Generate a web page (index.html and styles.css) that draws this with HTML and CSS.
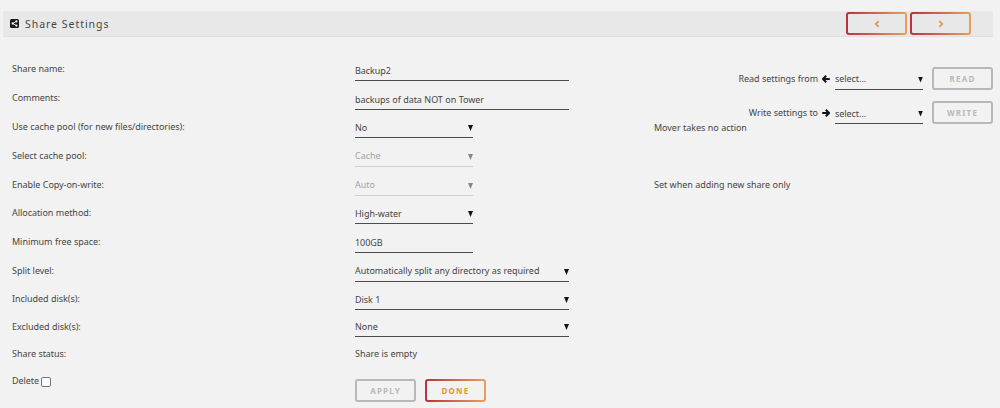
FILE: index.html
```html
<!DOCTYPE html>
<html lang="en">
<head>
	<meta charset="UTF-8">
	<meta name="viewport" content="width=device-width, initial-scale=1.0">
	<link rel="stylesheet" href="styles.css">
	<title>Share Settings</title>
</head>
<body>
	<header class="title">
		<svg class="share" viewBox="0 0 9 9"><rect width="9" height="9" rx="1.6" fill="#1c1b1b"/><path d="M6.4 2.4 2.7 4.5l3.7 2.1" fill="none" stroke="#f2f2f2" stroke-width=".9"/><circle cx="6.4" cy="2.4" r="1.15" fill="#f2f2f2"/><circle cx="2.7" cy="4.5" r="1.15" fill="#f2f2f2"/><circle cx="6.4" cy="6.6" r="1.15" fill="#f2f2f2"/></svg>
		<h1>Share Settings</h1>
		<nav>
			<button class="btn" aria-label="previous"><svg class="chev" viewBox="0 0 6 8"><path d="M4.6 1.2 1.8 4l2.8 2.8"/></svg></button>
			<button class="btn" aria-label="next"><svg class="chev" viewBox="0 0 6 8"><path d="M1.4 1.2 4.2 4 1.4 6.8"/></svg></button>
		</nav>
	</header>

	<main>
		<form class="settings">
			<label for="name">Share name:</label>
			<div class="field wide"><input id="name" type="text" value="Backup2"></div>

			<label for="comments">Comments:</label>
			<div class="field wide"><input id="comments" type="text" value="backups of data NOT on Tower"></div>

			<label for="cache">Use cache pool (for new files/directories):</label>
			<div class="field drop"><select id="cache"><option>No</option></select></div>
			<p class="hint">Mover takes no action</p>

			<label for="pool" class="low">Select cache pool:</label>
			<div class="field drop off"><select id="pool" disabled><option>Cache</option></select></div>

			<label for="cow" class="low">Enable Copy-on-write:</label>
			<div class="field drop off"><select id="cow" disabled><option>Auto</option></select></div>
			<p class="hint">Set when adding new share only</p>

			<label for="alloc">Allocation method:</label>
			<div class="field drop"><select id="alloc"><option>High-water</option></select></div>

			<label for="free" class="low">Minimum free space:</label>
			<div class="field"><input id="free" type="text" value="100GB"></div>

			<label for="split" class="low">Split level:</label>
			<div class="field wide drop"><select id="split"><option>Automatically split any directory as required</option></select></div>

			<label for="include">Included disk(s):</label>
			<div class="field wide drop"><select id="include"><option>Disk 1</option></select></div>

			<label for="exclude">Excluded disk(s):</label>
			<div class="field wide drop"><select id="exclude"><option>None</option></select></div>

			<label>Share status:</label>
			<p class="status">Share is empty</p>

			<label class="delete">Delete <input type="checkbox"></label>
			<div class="actions">
				<button class="btn off" type="button" disabled>Apply</button>
				<button class="btn" type="button">Done</button>
			</div>
		</form>

		<aside class="copy">
			<div class="copy-row">
				<label for="read">Read settings from</label>
				<svg class="arrow" viewBox="0 0 8 8"><path d="M7.8 4H1.2M4.2 .8 1 4l3.2 3.2"/></svg>
				<div class="field drop"><select id="read"><option>select...</option></select></div>
				<button class="btn off" disabled>Read</button>
			</div>
			<div class="copy-row">
				<label for="write">Write settings to</label>
				<svg class="arrow" viewBox="0 0 8 8"><path d="M.2 4h6.6M3.8 .8 7 4 3.8 7.2"/></svg>
				<div class="field drop"><select id="write"><option>select...</option></select></div>
				<button class="btn off" disabled>Write</button>
			</div>
		</aside>
	</main>
</body>
</html>
```
FILE: styles.css
```css
* {
  box-sizing: border-box;
  margin: 0;
  padding: 0;
  font: inherit;
  letter-spacing: inherit;
  word-spacing: inherit;
  color: inherit;
}
body {
  height: 408px;
  overflow: hidden;
  background: #f2f2f2;
  color: #464646;
  font: 9px/12px "Noto Sans", sans-serif;
  letter-spacing: -0.05px;
  word-spacing: 0.2px;
}
.title {
  display: flex;
  align-items: center;
  height: 26px;
  margin: 11px 7px 0 3px;
  padding: 0 22px 0 7px;
  border-bottom: 1px solid #e0e0e0;
  background: #e8e8e8;
}
.share {
  width: 9px;
  height: 9px;
}
.title h1 {
  margin-left: 6px;
  font-size: 10.5px;
  letter-spacing: 0.95px;
}
.title nav {
  display: flex;
  gap: 3px;
  margin-left: auto;
}
.btn {
  display: flex;
  align-items: center;
  justify-content: center;
  width: 61px;
  height: 23px;
  border: 2px solid transparent;
  border-radius: 3px;
  background: linear-gradient(#f2f2f2, #f2f2f2) padding-box,
    linear-gradient(90deg, #b8323f, #e8a05c) border-box;
  color: #e3943f;
  font-size: 8px;
  font-weight: 700;
  letter-spacing: 1.2px;
  text-transform: uppercase;
}
.title .btn {
  background: linear-gradient(#e8e8e8, #e8e8e8) padding-box,
    linear-gradient(90deg, #b8323f, #e8a05c) border-box;
}
.btn.off {
  border-color: #b8b8b8;
  background: none;
  color: #b9b9b9;
}
.chev {
  width: 6px;
  height: 8px;
  fill: none;
  stroke: #e3943f;
  stroke-width: 1.7;
}
main {
  display: flex;
  align-items: flex-start;
  padding: 15px 7px 0 12px;
}
.settings {
  display: grid;
  grid-template-columns: 343px 299px 1fr;
  grid-template-rows: 29px 29px 28px 29px 29px 28px 29px 29px 28px 27px 27px 42px;
  width: 720px;
}
.settings > label {
  grid-column: 1;
  padding-top: 11px;
}
.settings > .low {
  padding-top: 12px;
}
.field {
  grid-column: 2;
  position: relative;
  width: 118px;
  height: 100%;
}
.field.wide {
  width: 214px;
}
.field input, .field select {
  display: block;
  width: 100%;
  height: 100%;
  padding-top: 8px;
  border: 0;
  border-bottom: 1px solid #4c4c4c;
  border-radius: 0;
  outline: 0;
  background: none;
  opacity: 1;
  -webkit-appearance: none;
  appearance: none;
}
.drop::after {
  position: absolute;
  right: 0;
  bottom: 7px;
  width: 5px;
  height: 6px;
  background: #141414;
  clip-path: polygon(0 0, 100% 0, 50% 100%);
  content: '';
}
.field.off {
  color: #a3a3a3;
}
.off select {
  border-color: #cfcfcf;
}
.drop.off::after {
  background: #858585;
}
.hint {
  grid-column: 3;
  padding-top: 12px;
  white-space: nowrap;
}
.status {
  padding-top: 11px;
}
.delete {
  display: flex;
  gap: 2px;
}
.delete input {
  width: 10px;
  height: 10px;
  margin-top: 2px;
  border: 1px solid #777;
  border-radius: 2px;
  background: #fff;
  -webkit-appearance: none;
  appearance: none;
}
.actions {
  display: flex;
  gap: 9px;
  padding-top: 15px;
}
.copy {
  width: 261px;
  margin: 15px 0 0;
}
.copy-row {
  display: flex;
  align-items: center;
  justify-content: flex-end;
  height: 23px;
  margin-bottom: 11px;
}
.arrow {
  width: 8px;
  height: 8px;
  margin: 0 5px 0 4px;
  fill: none;
  stroke: #141414;
  stroke-width: 2;
}
.copy .field {
  width: 88px;
  height: 22px;
}
.copy .field select {
  padding-top: 2px;
}
.copy #write {
  padding-top: 4px;
}
.copy .btn {
  margin-left: 9px;
}
```
